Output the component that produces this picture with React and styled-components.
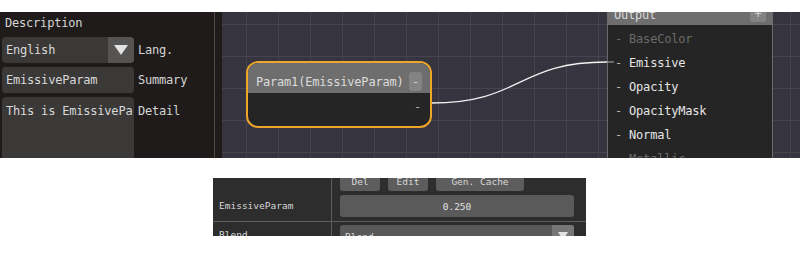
import React from "react";
import styled, { createGlobalStyle } from "styled-components";

const Global = createGlobalStyle`
  html, body { margin: 0; padding: 0; background: #ffffff; }
  body { font-family: "DejaVu Sans Mono", "Liberation Mono", monospace; }
  * { box-sizing: border-box; }
`;

const mono = `"DejaVu Sans Mono", "Liberation Mono", monospace`;

const Page = styled.div`
  width: 800px;
  height: 260px;
  overflow: hidden;
  padding-top: 12px;
`;

const TopView = styled.div`
  display: flex;
  height: 146px;
  background: #1f1b1a;
`;

const LeftPanel = styled.div`
  width: 214px;
  flex: none;
  padding-left: 2px;
  display: grid;
  grid-template-columns: 132px auto;
  grid-template-rows: 21px 26px 26px 1fr;
  column-gap: 4px;
  row-gap: 4px;
  font-family: ${mono};
  font-size: 12px;
  letter-spacing: -0.2px;
  color: #d4d4d4;
  overflow: hidden;
`;

const Title = styled.div`
  grid-column: 1 / span 2;
  padding-left: 3px;
  line-height: 23px;
`;

const Field = styled.div`
  background: #3b3938;
  border-radius: 4px;
  display: flex;
  align-items: ${(p) => (p.$multi ? "flex-start" : "center")};
  padding: ${(p) => (p.$multi ? "7px 0 0 4px" : "0 0 0 4px")};
  overflow: hidden;
  white-space: nowrap;
  color: #d8d8d8;
  border-bottom-left-radius: ${(p) => (p.$multi ? "0" : "4px")};
  border-bottom-right-radius: ${(p) => (p.$multi ? "0" : "4px")};
`;

const FieldText = styled.span`
  flex: 1;
  overflow: hidden;
`;

const DropButton = styled.div`
  width: ${(p) => p.$w || 26}px;
  align-self: stretch;
  background: ${(p) => p.$bg || "#565453"};
  display: flex;
  align-items: center;
  justify-content: center;
  flex: none;
`;

const Triangle = styled.div`
  width: 0;
  height: 0;
  border-left: ${(p) => p.$s / 2}px solid transparent;
  border-right: ${(p) => p.$s / 2}px solid transparent;
  border-top: ${(p) => p.$s * 0.78}px solid #e2e2e2;
`;

const SideLabel = styled.div`
  line-height: ${(p) => (p.$top ? "28px" : "26px")};
  white-space: nowrap;
`;

const Divider = styled.div`
  width: 1px;
  flex: none;
  background: #4d4a48;
`;

const Gutter = styled.div`
  width: 7px;
  flex: none;
`;

const Canvas = styled.div`
  position: relative;
  flex: 1;
  overflow: hidden;
  background-color: #36353f;
  background-image:
    linear-gradient(to right, #46454f 1px, transparent 1px),
    linear-gradient(to bottom, #46454f 1px, transparent 1px);
  background-size: 32px 32px;
  background-position: 24px 12px;
  font-family: ${mono};
  font-size: 12px;
  letter-spacing: -0.2px;
`;

const Wire = styled.svg`
  position: absolute;
  left: 0;
  top: 0;
  pointer-events: none;
  z-index: 2;
`;

const Node = styled.div`
  position: absolute;
  left: ${(p) => p.$x}px;
  top: ${(p) => p.$y}px;
  width: ${(p) => p.$w}px;
  height: ${(p) => p.$h}px;
  border: ${(p) => (p.$selected ? "2px solid #eda52a" : "1.5px solid #6b6b6b")};
  border-radius: ${(p) => p.$r}px;
  background: #252525;
  overflow: hidden;
  display: flex;
  flex-direction: column;
  z-index: ${(p) => (p.$z ? 3 : 1)};
`;

const NodeHeader = styled.div`
  height: ${(p) => p.$h}px;
  flex: none;
  background: #6e6e6e;
  color: #dcdcdc;
  display: flex;
  align-items: center;
  padding: ${(p) => p.$pt || 0}px ${(p) => p.$pr}px 0 ${(p) => p.$pl}px;
  white-space: nowrap;
`;

const HeaderTitle = styled.span`
  flex: 1;
  line-height: 20px;
`;

const SmallButton = styled.div`
  width: ${(p) => p.$w}px;
  height: ${(p) => p.$h}px;
  background: #838383;
  border-radius: 3px;
  color: #d0d0d0;
  display: flex;
  align-items: center;
  justify-content: center;
  margin-top: ${(p) => p.$mt || 0}px;
  flex: none;
`;

const NodeBody = styled.div`
  flex: 1;
  display: flex;
  flex-direction: column;
  align-items: ${(p) => (p.$right ? "flex-end" : "stretch")};
  padding: ${(p) => p.$pad};
`;

const Port = styled.div`
  line-height: 24px;
  white-space: nowrap;
  color: ${(p) => (p.$dim ? "#6b6b6b" : "#e6e6e6")};
`;

const Dash = styled.span`
  color: ${(p) => (p.$dim ? "#6b6b6b" : "#b4b4b4")};
`;

const BottomView = styled.div`
  margin: 20px 0 0 213px;
  width: 373px;
  height: 58px;
  overflow: hidden;
  background: #2d2d2d;
  font-family: ${mono};
  font-size: 9.5px;
  color: #d6d6d6;
`;

const PropGrid = styled.div`
  margin-top: -6px;
  display: grid;
  grid-template-columns: 119px 1fr;
`;

const PropLabel = styled.div`
  border-right: 1px solid #5c5c5c;
  border-bottom: ${(p) => (p.$last ? "none" : "1px solid #5c5c5c")};
  padding-left: 6px;
  display: flex;
  align-items: ${(p) => (p.$top ? "flex-start" : "flex-end")};
  padding-bottom: ${(p) => (p.$top ? 0 : 4)}px;
  padding-top: ${(p) => (p.$top ? 2 : 0)}px;
`;

const LabelLine = styled.span`
  line-height: 22px;
`;

const PropValue = styled.div`
  border-bottom: ${(p) => (p.$last ? "none" : "1px solid #5c5c5c")};
  padding: ${(p) => p.$pad};
  display: flex;
  flex-direction: column;
  gap: 4px;
`;

const ButtonRow = styled.div`
  display: flex;
  gap: 8px;
`;

const PropButton = styled.div`
  height: 19px;
  width: ${(p) => p.$w}px;
  background: #5d5d5d;
  border-radius: 3px;
  display: flex;
  align-items: center;
  justify-content: center;
  color: #d8d8d8;
`;

const ValueField = styled.div`
  height: 22px;
  background: #5a5a5a;
  border-radius: 3px;
  display: flex;
  align-items: center;
  justify-content: center;
  color: #e0e0e0;
`;

const SelectField = styled.div`
  height: 22px;
  background: #595959;
  border-radius: 3px;
  display: flex;
  align-items: center;
  padding-left: 5px;
  overflow: hidden;
`;

const ports = [
  { name: "BaseColor", dim: true },
  { name: "Emissive" },
  { name: "Opacity" },
  { name: "OpacityMask" },
  { name: "Normal" },
  { name: "Metallic", dim: true },
];

export default function App() {
  return (
    <Page>
      <Global />
      <TopView>
        <LeftPanel>
          <Title>Description</Title>
          <Field>
            <FieldText>English</FieldText>
            <DropButton>
              <Triangle $s={14} />
            </DropButton>
          </Field>
          <SideLabel>Lang.</SideLabel>
          <Field>
            <FieldText>EmissiveParam</FieldText>
          </Field>
          <SideLabel>Summary</SideLabel>
          <Field $multi>
            <FieldText>This is EmissiveParam</FieldText>
          </Field>
          <SideLabel $top>Detail</SideLabel>
        </LeftPanel>
        <Divider />
        <Gutter />
        <Canvas>
          <Wire width="578" height="146" viewBox="0 0 578 146">
            <path d="M200 91 L209 91" stroke="#7a7a7a" strokeWidth="1.2" fill="none" />
            <path
              d="M209 91 C 300 91, 295 50, 385 50"
              stroke="#f2f2f2"
              strokeWidth="1.3"
              fill="none"
            />
            <path d="M385 50 L392 50" stroke="#9a9a9a" strokeWidth="1.2" fill="none" />
          </Wire>
          <Node $x={24} $y={49} $w={186} $h={67} $r={12} $selected $z>
            <NodeHeader $h={30} $pl={8} $pr={8} $pt={7}>
              <HeaderTitle>Param1(EmissiveParam)</HeaderTitle>
              <SmallButton $w={13} $h={19}>-</SmallButton>
            </NodeHeader>
            <NodeBody $right $pad="2px 9px 0 0">
              <Port>
                <Dash>-</Dash>
              </Port>
            </NodeBody>
          </Node>
          <Node $x={385} $y={-8} $w={166} $h={172} $r={3}>
            <NodeHeader $h={20} $pl={6} $pr={6}>
              <HeaderTitle>Output</HeaderTitle>
              <SmallButton $w={16} $h={15} $mt={-2}>+</SmallButton>
            </NodeHeader>
            <NodeBody $pad="1.5px 0 0 7px">
              {ports.map((p) => (
                <Port key={p.name} $dim={p.dim}>
                  <Dash $dim={p.dim}>-</Dash> {p.name}
                </Port>
              ))}
            </NodeBody>
          </Node>
        </Canvas>
      </TopView>
      <BottomView>
        <PropGrid>
          <PropLabel>
            <LabelLine>EmissiveParam</LabelLine>
          </PropLabel>
          <PropValue $pad="0 12px 4px 8px">
            <ButtonRow>
              <PropButton $w={40}>Del</PropButton>
              <PropButton $w={40}>Edit</PropButton>
              <PropButton $w={88}>Gen. Cache</PropButton>
            </ButtonRow>
            <ValueField>0.250</ValueField>
          </PropValue>
          <PropLabel $top $last>
            <LabelLine>Blend</LabelLine>
          </PropLabel>
          <PropValue $pad="3px 12px 0 8px" $last>
            <SelectField>
              <FieldText>Blend</FieldText>
              <DropButton $w={22} $bg="#767676">
                <Triangle $s={11} />
              </DropButton>
            </SelectField>
          </PropValue>
        </PropGrid>
      </BottomView>
    </Page>
  );
}
